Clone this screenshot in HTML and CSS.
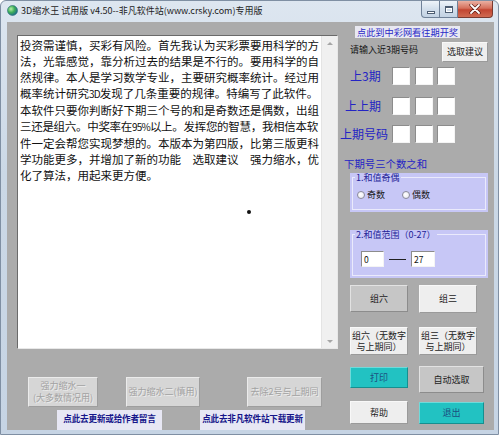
FILE: index.html
```html
<!DOCTYPE html>
<html lang="zh-CN">
<head>
<meta charset="utf-8">
<title>3D缩水王</title>
<link rel="stylesheet" href="styles.css">
</head>
<body>
<div class="window">
  <div class="titlebar">
    <svg class="appicon" width="11" height="11" viewBox="0 0 11 11">
      <defs>
        <radialGradient id="g1" cx="35%" cy="35%" r="70%">
          <stop offset="0" stop-color="#b8f0a8"/>
          <stop offset="0.5" stop-color="#3fae5a"/>
          <stop offset="1" stop-color="#1a6a8a"/>
        </radialGradient>
      </defs>
      <circle cx="5.5" cy="5.5" r="5" fill="url(#g1)" stroke="#2a6a7a" stroke-width="0.6"/>
    </svg>
    <span class="title">3D缩水王 试用版 v4.50--非凡软件站(www.crsky.com)专用版</span>
    <div class="capbtns">
      <div class="cb cb-min"><span class="glyph-min"></span></div>
      <div class="cb cb-max"><span class="glyph-max"></span></div>
      <div class="cb cb-close">
        <svg width="12" height="10" viewBox="0 0 12 10"><path d="M2 1 L10 9 M10 1 L2 9" stroke="#5a1a12" stroke-width="3.2" stroke-linecap="round"/><path d="M2 1 L10 9 M10 1 L2 9" stroke="#ffffff" stroke-width="1.8" stroke-linecap="round"/></svg>
      </div>
    </div>
  </div>
  <div class="client">
    <div class="left">
      <div class="memo">
        <div class="memo-text">投资需谨慎，买彩有风险。首先我认为买彩票要用科学的方<br>法，光靠感觉，靠分析过去的结果是不行的。要用科学的自<br>然规律。本人是学习数学专业，主要研究概率统计。经过用<br>概率统计研究<span class="half">3D</span>发现了几条重要的规律。特编写了此软件。<br>本软件只要你判断好下期三个号的和是奇数还是偶数，出组<br><span class="tight">三还是组六。中奖率在<span class="half">95%</span>以上。发挥您的智慧，我相信本软</span><br>件一定会帮您实现梦想的。本版本为第四版，比第三版更科<br>学功能更多，并增加了新的功能　选取建议　强力缩水，优<br>化了算法，用起来更方便。</div>
        <div class="vscroll"><span class="arr arr-up"></span><span class="arr arr-down"></span></div>
        <span class="cursor-dot"></span>
      </div>
      <div class="bottom-btns">
        <button class="btn btn-disabled bb1">强力缩水一<br>(大多数情况用)</button>
        <button class="btn btn-disabled bb2">强力缩水二(慎用)</button>
        <button class="btn btn-disabled bb3">去除2号与上期同</button>
      </div>
      <div class="bottom-links">
        <a class="linkbox">点此去更新或给作者留言</a>
        <a class="linkbox lb2">点此去非凡软件站下载更新</a>
      </div>
    </div>
    <div class="right">
      <a class="toplink">点此到中彩网看往期开奖</a>
      <div class="row-input">
        <span class="hint">请输入近3期号码</span>
        <button class="btn btn-light btn-suggest">选取建议</button>
      </div>
      <div class="numrow nr1">
        <span class="numlabel pl10">上3期</span>
        <span class="nbox"></span><span class="nbox"></span><span class="nbox"></span>
      </div>
      <div class="numrow nr2">
        <span class="numlabel pl5">上上期</span>
        <span class="nbox"></span><span class="nbox"></span><span class="nbox"></span>
      </div>
      <div class="numrow nr3">
        <span class="numlabel">上期号码</span>
        <span class="nbox"></span><span class="nbox"></span><span class="nbox"></span>
      </div>
      <div class="sumtitle">下期号三个数之和</div>
      <div class="group g1">
        <div class="gframe">
          <span class="gcap">1.和值奇偶</span>
          <div class="radios">
            <span class="radio"></span><span class="rlabel">奇数</span>
            <span class="radio r2"></span><span class="rlabel">偶数</span>
          </div>
        </div>
      </div>
      <div class="group g2">
        <div class="gframe">
          <span class="gcap">2.和值范围（0-27）</span>
          <div class="range">
            <span class="tbox">0</span>
            <span class="dash"></span>
            <span class="tbox tb2">27</span>
          </div>
        </div>
      </div>
      <div class="brow br1">
        <button class="btn btn-gray w58 h27">组六</button>
        <button class="btn btn-light w58 h28 ml11">组三</button>
      </div>
      <div class="brow br2">
        <button class="btn btn-light w58 h28 two">组六（无数字<br>与上期同）</button>
        <button class="btn btn-light w58 h28 ml11 two">组三（无数字<br>与上期同）</button>
      </div>
      <div class="brow br3">
        <button class="btn btn-teal w58 h21 mt1">打印</button>
        <button class="btn btn-gray w65 h27 ml11">自动选取</button>
      </div>
      <div class="brow br4">
        <button class="btn btn-light w58 h23">帮助</button>
        <button class="btn btn-teal w65 h22 ml11 mt1">退出</button>
      </div>
    </div>
  </div>
</div>
</body>
</html>
```

FILE: styles.css
```css
* { box-sizing: border-box; }
html, body { margin: 0; padding: 0; }
body {
  width: 499px;
  height: 435px;
  overflow: hidden;
  background: #ffffff;
  font-family: "Noto Sans CJK SC", "Liberation Sans", sans-serif;
  text-autospace: no-autospace;
}

.window {
  width: 499px;
  height: 435px;
  display: flex;
  flex-direction: column;
  background: linear-gradient(#dde6f0, #cbd8e6 40%, #c6d4e4);
  border: 1px solid #7f8fa3;
  border-radius: 6px 6px 0 0;
}

/* title bar */
.titlebar {
  height: 21px;
  display: flex;
  align-items: flex-start;
  flex: none;
}
.appicon { margin: 4px 0 0 6px; flex: none; }
.title {
  margin: 4px 0 0 3px;
  font-size: 9px;
  line-height: 12px;
  color: #1c1c1c;
  white-space: nowrap;
}
.capbtns {
  margin-left: auto;
  margin-right: 5px;
  display: flex;
}
.cb {
  height: 17px;
  border: 1px solid #6f8198;
  border-top: none;
  display: flex;
  align-items: center;
  justify-content: center;
}
.cb-min {
  width: 19px;
  border-radius: 0 0 0 4px;
  background: linear-gradient(#eef3f9, #d3dfec 50%, #c3d2e3);
}
.cb-max {
  width: 18px;
  border-left: none;
  background: linear-gradient(#eef3f9, #d3dfec 50%, #c3d2e3);
}
.cb-close {
  width: 35px;
  border-left: none;
  border-color: #7a3a30;
  border-radius: 0 0 4px 0;
  background: linear-gradient(#eab0a2, #d5705c 45%, #c24531 55%, #d06a52);
}
.glyph-min {
  width: 8px; height: 3px;
  margin-top: 6px;
  background: #ffffff;
  border: 1px solid #4d5d72;
}
.glyph-max {
  width: 8px; height: 7px;
  border: 1px solid #4d5d72;
  border-top-width: 2px;
  background: transparent;
  box-shadow: inset 0 0 0 1px #ffffff;
}

/* client */
.client {
  flex: 1;
  margin: 0 4px 4px 6px;
  background: #ababab;
  display: grid;
  grid-template-columns: 333px 154px;
}

.left { display: flex; flex-direction: column; }

.memo {
  position: relative;
  margin: 13px 0 0 10px;
  width: 321px;
  height: 314px;
  background: #ffffff;
  border: 1px solid;
  border-color: #6a6a6a #e8e8e8 #e8e8e8 #6a6a6a;
  display: flex;
}
.memo-text {
  flex: 1;
  padding: 1px 0 0 2px;
  font-size: 11.5px;
  line-height: 16px;
  color: #111111;
  white-space: nowrap;
  overflow: hidden;
}
.half { letter-spacing: -0.8px; font-size: 10px; }
.tight { letter-spacing: -0.3px; }
.vscroll {
  width: 16px;
  background: #f0f0f0;
  border-left: 1px solid #e4e4e4;
  display: flex;
  flex-direction: column;
  justify-content: space-between;
  align-items: center;
  padding: 6px 0 5px;
}
.arr { width: 0; height: 0; border-left: 3px solid transparent; border-right: 3px solid transparent; }
.arr-up { border-bottom: 3px solid #a6a6a6; }
.arr-down { border-top: 3px solid #a6a6a6; }
.cursor-dot {
  position: absolute;
  left: 229px;
  top: 174px;
  width: 4px;
  height: 4px;
  border-radius: 50%;
  background: #111111;
}

.btn {
  margin: 0;
  padding: 0;
  font-family: "Noto Sans CJK SC", "Liberation Sans", sans-serif;
  font-size: 9px;
  line-height: 12px;
  color: #222222;
  border: 1px solid;
  text-align: center;
  white-space: nowrap;
  display: flex;
  align-items: center;
  justify-content: center;
}
.btn-disabled {
  height: 30px;
  background: #d6d6d6;
  border-color: #ebebeb #9e9e9e #9e9e9e #ebebeb;
  color: #a2a2a2;
  text-shadow: 1px 1px 0 #ececec;
}
.bottom-btns { display: flex; margin-top: 28px; padding-left: 21px; }
.bb1 { width: 70px; }
.bb2 { width: 74px; margin-left: 28px; }
.bb3 { width: 75px; margin-left: 47px; }

.bottom-links { display: flex; margin-top: 3px; padding-left: 50px; }
.linkbox {
  width: 105px;
  height: 20px;
  background: #e7e7f4;
  color: #15158a;
  font-size: 8.6px;
  line-height: 12px;
  padding-top: 2px;
  text-align: center;
  font-weight: 700;
  white-space: nowrap;
  letter-spacing: -0.2px;
}
.lb2 { margin-left: 38px; }

/* right column */
.right { display: flex; flex-direction: column; }
.toplink {
  margin: 4px 0 0 15px;
  width: 105px;
  height: 12px;
  background: #e9e9f1;
  color: #2a2ac8;
  font-size: 9.2px;
  line-height: 12px;
  padding-left: 2px;
  white-space: nowrap;
}
.row-input { display: flex; margin-top: 4px; height: 20px; }
.hint {
  margin: 3px 0 0 10px;
  font-size: 9px;
  line-height: 10px;
  color: #151515;
  white-space: nowrap;
}
.btn-light {
  background: #eeeeee;
  border-color: #f8f8f8 #9a9a9a #9a9a9a #f8f8f8;
}
.btn-suggest { margin-left: auto; margin-right: 6px; width: 46px; height: 20px; }

.numrow { display: flex; height: 18px; gap: 4.5px; }
.nr1 { margin-top: 5px; }
.nr2 { margin-top: 12px; }
.nr3 { margin-top: 10px; }
.numlabel {
  width: 47.5px;
  font-size: 12px;
  line-height: 18px;
  color: #2424c4;
  white-space: nowrap;
}
.pl10 { padding-left: 10px; }
.pl5 { padding-left: 5px; }
.nbox {
  width: 18px;
  height: 18px;
  background: #ffffff;
  border: 1px solid;
  border-color: #8c8c8c #f4f4f4 #f4f4f4 #8c8c8c;
}

.sumtitle {
  margin: 15px 0 0 4px;
  font-size: 10.4px;
  line-height: 12px;
  color: #2424c4;
  white-space: nowrap;
}

.group {
  margin-left: 10px;
  width: 138px;
  background: #c7c7f6;
  padding: 4px 2px 2px;
}
.g1 { margin-top: 3px; height: 39px; }
.g2 { margin-top: 18px; height: 48px; }
.gframe {
  height: 100%;
  border: 1px solid #eaeafc;
  display: flex;
  flex-direction: column;
}
.gcap {
  align-self: flex-start;
  margin: -5px 0 0 2px;
  padding: 0 1px;
  background: #c7c7f6;
  font-size: 9px;
  line-height: 10px;
  color: #1e1e96;
  white-space: nowrap;
}
.radios {
  display: flex;
  align-items: center;
  margin-top: 7px;
  padding-left: 4px;
}
.radio {
  width: 8px;
  height: 8px;
  border-radius: 50%;
  border: 1px solid #8a8a9a;
  background: radial-gradient(circle at 40% 40%, #ffffff, #e6e6ee);
}
.r2 { margin-left: 17px; }
.rlabel {
  margin-left: 2px;
  font-size: 9px;
  line-height: 10px;
  color: #1a1a1a;
}
.range {
  display: flex;
  align-items: center;
  margin-top: 11px;
  padding-left: 8px;
}
.tbox {
  width: 23px;
  height: 16px;
  background: #ffffff;
  border: 1px solid;
  border-color: #8c8c8c #f4f4f4 #f4f4f4 #8c8c8c;
  font-size: 8.5px;
  line-height: 14px;
  padding-left: 2px;
  color: #111111;
}
.tb2 { width: 24px; }
.dash {
  width: 17px;
  height: 1px;
  margin: 0 5px;
  background: #202020;
}

.brow { display: flex; align-items: flex-start; padding-left: 10px; }
.br1 { margin-top: 7px; }
.br2 { margin-top: 14px; }
.br3 { margin-top: 11px; }
.br4 { margin-top: 8px; }
.w58 { width: 58px; }
.w65 { width: 65px; }
.h21 { height: 21px; }
.h22 { height: 22px; }
.h23 { height: 23px; }
.h27 { height: 27px; }
.h28 { height: 28px; }
.ml11 { margin-left: 11px; }
.mt1 { margin-top: 1px; }
.btn-gray {
  background: #c6c6c6;
  border-color: #e2e2e2 #8c8c8c #8c8c8c #e2e2e2;
}
.btn-teal {
  background: #22c2c2;
  border-color: #6fdada #168f8f #168f8f #6fdada;
  color: #1b4f80;
}
.two { line-height: 11.5px; }
```
